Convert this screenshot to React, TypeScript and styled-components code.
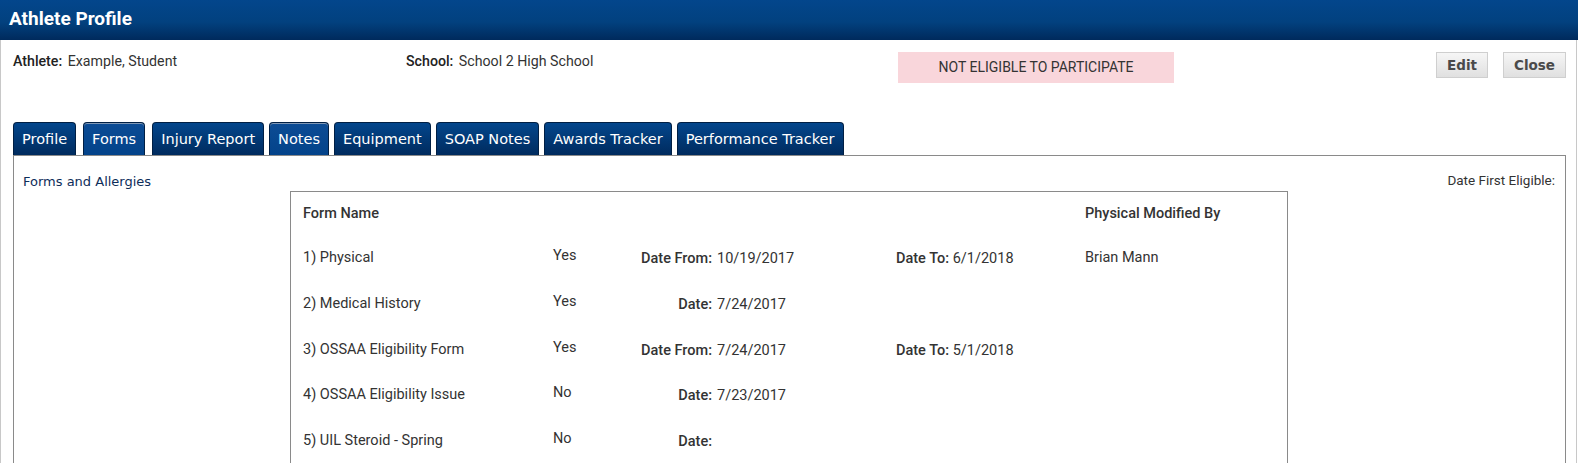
import React from 'react';
import styled, { createGlobalStyle } from 'styled-components';

const GlobalStyle = createGlobalStyle`
    html, body {
        margin: 0;
        padding: 0;
        background: #fff;
        font-family: Roboto, 'Liberation Sans', sans-serif;
        color: #333;
        overflow: hidden;
    }
`;

type FormRow = {
    name: string;
    answer: string;
    dateLabel: string;
    dateValue: string;
    toValue?: string;
    modifiedBy?: string;
};

const rows: FormRow[] = [
    { name: '1) Physical', answer: 'Yes', dateLabel: 'Date From:', dateValue: '10/19/2017', toValue: '6/1/2018', modifiedBy: 'Brian Mann' },
    { name: '2) Medical History', answer: 'Yes', dateLabel: 'Date:', dateValue: '7/24/2017' },
    { name: '3) OSSAA Eligibility Form', answer: 'Yes', dateLabel: 'Date From:', dateValue: '7/24/2017', toValue: '5/1/2018' },
    { name: '4) OSSAA Eligibility Issue', answer: 'No', dateLabel: 'Date:', dateValue: '7/23/2017' },
    { name: '5) UIL Steroid - Spring', answer: 'No', dateLabel: 'Date:', dateValue: '' },
];

// Forms is the current tab, Notes shows the hover colour
const tabs = [
    { label: 'Profile', light: false, active: false },
    { label: 'Forms', light: true, active: true },
    { label: 'Injury Report', light: false, active: false },
    { label: 'Notes', light: true, active: false },
    { label: 'Equipment', light: false, active: false },
    { label: 'SOAP Notes', light: false, active: false },
    { label: 'Awards Tracker', light: false, active: false },
    { label: 'Performance Tracker', light: false, active: false },
];

const App = () => {
    return (
        <>
            <GlobalStyle />
            <TitleBar>Athlete Profile</TitleBar>
            <Frame>
                <InfoRow>
                    <InfoItem>
                        <b>Athlete:</b> Example, Student
                    </InfoItem>
                    <InfoItem>
                        <b>School:</b> School 2 High School
                    </InfoItem>
                    <StatusBox>NOT ELIGIBLE TO PARTICIPATE</StatusBox>
                    <Buttons>
                        <Button>Edit</Button>
                        <Button>Close</Button>
                    </Buttons>
                </InfoRow>

                <TabBar>
                    {tabs.map((t) => (
                        <Tab key={t.label} $light={t.light} $active={t.active}>
                            {t.label}
                        </Tab>
                    ))}
                </TabBar>

                <Panel>
                    <SectionTitle>Forms and Allergies</SectionTitle>
                    <FormsBox>
                        <Row>
                            <HeadCell>Form Name</HeadCell>
                            <span />
                            <span />
                            <span />
                            <HeadCell>Physical Modified By</HeadCell>
                        </Row>
                        {rows.map((r) => (
                            <Row key={r.name}>
                                <span>{r.name}</span>
                                <Answer>{r.answer}</Answer>
                                <DateCell>
                                    <DateLabel>{r.dateLabel}</DateLabel>
                                    {r.dateValue}
                                </DateCell>
                                <DateCell>
                                    {r.toValue && (
                                        <>
                                            <b>Date To:</b> {r.toValue}
                                        </>
                                    )}
                                </DateCell>
                                <span>{r.modifiedBy}</span>
                            </Row>
                        ))}
                    </FormsBox>
                    <FirstEligible>Date First Eligible:</FirstEligible>
                </Panel>
            </Frame>
        </>
    );
};

export default App;

const TitleBar = styled.div`
    height: 40px;
    box-sizing: border-box;
    padding: 8px 9px 0;
    background: linear-gradient(to bottom, #03468c 0%, #02417f 55%, #002a5c 100%);
    color: #fff;
    font-family: Roboto, 'Liberation Sans', sans-serif;
    font-weight: 700;
    font-size: 19px;
    line-height: 22px;
`;

const Frame = styled.div`
    border-left: 1px solid #c8c8c8;
    border-right: 1px solid #c8c8c8;
    margin-right: 1px;
    padding: 0 10px 0 12px;
    height: 423px;
    box-sizing: border-box;
    overflow: hidden;
`;

const InfoRow = styled.div`
    display: grid;
    grid-template-columns: 393px 492px 276px 1fr;
    align-items: start;
    padding-top: 12px;
    height: 82px;
    box-sizing: border-box;
`;

const InfoItem = styled.div`
    font-size: 14.2px;
    line-height: 19px;
    color: #333;

    b {
        font-weight: 500;
        color: #222;
        margin-right: 2px;
    }
`;

const StatusBox = styled.div`
    background: #f9d6db;
    height: 31px;
    line-height: 31px;
    text-align: center;
    font-size: 14px;
    color: #333;
`;

const Buttons = styled.div`
    display: flex;
    justify-content: flex-end;
    gap: 15px;
`;

const Button = styled.button`
    height: 26px;
    padding: 0 10px;
    border: 1px solid #cfcfcf;
    background: linear-gradient(to bottom, #f6f6f6, #e0e0e0);
    font-family: 'DejaVu Sans', Verdana, sans-serif;
    font-weight: 700;
    font-size: 13.5px;
    color: #4a4a4a;
    cursor: pointer;
`;

const TabBar = styled.div`
    display: flex;
    gap: 5px;
    height: 33px;
    align-items: flex-end;
`;

const Tab = styled.div<{ $light: boolean; $active: boolean }>`
    height: 33px;
    box-sizing: border-box;
    margin: 0 ${(p) => (p.$active ? '2px' : '0')};
    padding: 0 8px;
    border: 1px solid #001f44;
    border-bottom: none;
    border-radius: 4px 4px 0 0;
    background: ${(p) =>
        p.$light
            ? 'linear-gradient(to bottom, #0c4c95, #03438a)'
            : 'linear-gradient(to bottom, #03468c, #002b5e)'};
    box-shadow: ${(p) => (p.$light ? 'inset 0 1px 0 #7f97b5' : 'none')};
    color: #fff;
    font-family: 'DejaVu Sans', Verdana, sans-serif;
    font-size: 14.5px;
    line-height: 32px;
    white-space: nowrap;
`;

const Panel = styled.div`
    border: 1px solid #8a8a8a;
    border-bottom: none;
    height: 400px;
    display: grid;
    grid-template-columns: 276px 998px 1fr;
    align-items: start;
`;

const SectionTitle = styled.div`
    padding: 18px 0 0 9px;
    font-family: 'DejaVu Sans', Verdana, sans-serif;
    font-size: 13px;
    color: #0d2d5a;
`;

const FormsBox = styled.div`
    margin-top: 35px;
    border: 1px solid #8a8a8a;
    border-bottom: none;
    height: 400px;
    padding: 12px 0 0 12px;
    box-sizing: border-box;
`;

const Row = styled.div`
    display: grid;
    grid-template-columns: 250px 87px 256px 189px 1fr;
    height: 45.8px;
    align-items: start;
    font-size: 14.5px;
    line-height: 20px;
    color: #333;

    &:first-child {
        height: 44px;
    }
`;

const HeadCell = styled.span`
    font-weight: 500;
    color: #333;
`;

const Answer = styled.span`
    margin-top: -2px;
`;

const DateCell = styled.span`
    margin-top: 1px;

    b {
        font-weight: 500;
        color: #333;
    }
`;

const DateLabel = styled.b`
    display: inline-block;
    width: 72px;
    text-align: right;
    margin-right: 5px;
`;

const FirstEligible = styled.div`
    padding: 16px 10px 0 0;
    text-align: right;
    font-size: 13.5px;
    color: #333;
`;
